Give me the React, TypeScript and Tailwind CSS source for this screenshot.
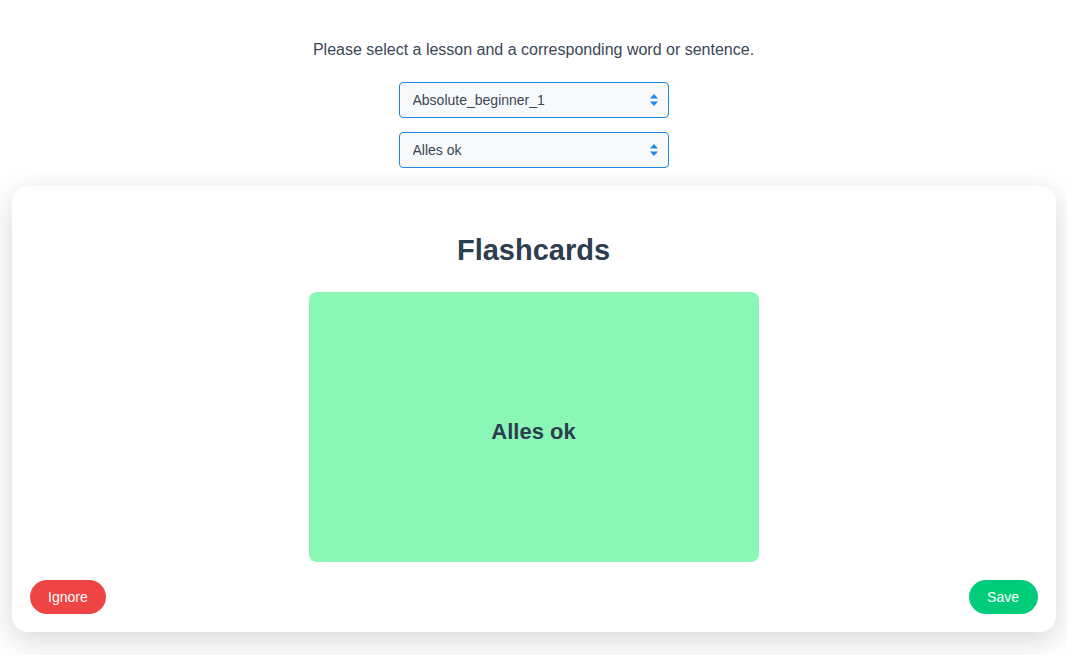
import React, { useState } from "react";

const lessons = ["Absolute_beginner_1", "Absolute_beginner_2"];
const phrases = ["Alles ok", "Guten Morgen"];

function Chevrons() {
  return (
    <svg width="10" height="14" viewBox="0 0 10 14" className="pointer-events-none">
      <path d="M5 1 L9 5.5 H1 Z" fill="#1e88e5" />
      <path d="M5 13 L9 8.5 H1 Z" fill="#1e88e5" />
    </svg>
  );
}

function Picker({
  value,
  options,
  onChange,
}: {
  value: string;
  options: string[];
  onChange: (v: string) => void;
}) {
  return (
    <div className="relative w-[270px] h-[36px]">
      <select
        value={value}
        onChange={(e) => onChange(e.target.value)}
        className="appearance-none w-full h-full rounded-[4px] border border-[#1e88e5] bg-[#f7f9fb] pl-[13px] pr-8 text-[14px] text-[#3a4756] outline-none"
      >
        {options.map((o) => (
          <option key={o}>{o}</option>
        ))}
      </select>
      <div className="absolute right-[10px] top-[11px]">
        <Chevrons />
      </div>
    </div>
  );
}

export default function App() {
  const [lesson, setLesson] = useState(lessons[0]);
  const [phrase, setPhrase] = useState(phrases[0]);

  return (
    <div className="min-h-[655px] bg-white font-['Liberation_Sans',Arial,sans-serif] text-[#2c3e50] flex flex-col items-center pt-[40px]">
      <p className="text-[16px] leading-[20px] text-[#3a4756]">
        Please select a lesson and a corresponding word or sentence.
      </p>
      <div className="mt-[22px] flex flex-col gap-[14px]">
        <Picker value={lesson} options={lessons} onChange={setLesson} />
        <Picker value={phrase} options={phrases} onChange={setPhrase} />
      </div>

      {/* Karte */}
      <div className="mt-[18px] w-[1044px] rounded-[16px] bg-white shadow-[0_8px_30px_rgba(0,0,0,0.16)] px-[18px] pb-[18px] pt-[48px] flex flex-col items-center">
        <h1 className="text-[29px] leading-[33px] font-bold text-[#2c3e50]">Flashcards</h1>
        <div className="mt-[25px] w-[450px] h-[270px] rounded-[8px] bg-[#8af7b6] pt-[8px] flex items-center justify-center">
          <span className="text-[22px] font-bold text-[#2c3e50]">{phrase}</span>
        </div>
        <div className="mt-[18px] w-full flex justify-between">
          <button className="h-[34px] px-[18.5px] rounded-full bg-[#ef4444] text-white text-[14px]">
            Ignore
          </button>
          <button className="h-[34px] px-[18.5px] rounded-full bg-[#00cc7a] text-white text-[14px]">
            Save
          </button>
        </div>
      </div>
    </div>
  );
}
